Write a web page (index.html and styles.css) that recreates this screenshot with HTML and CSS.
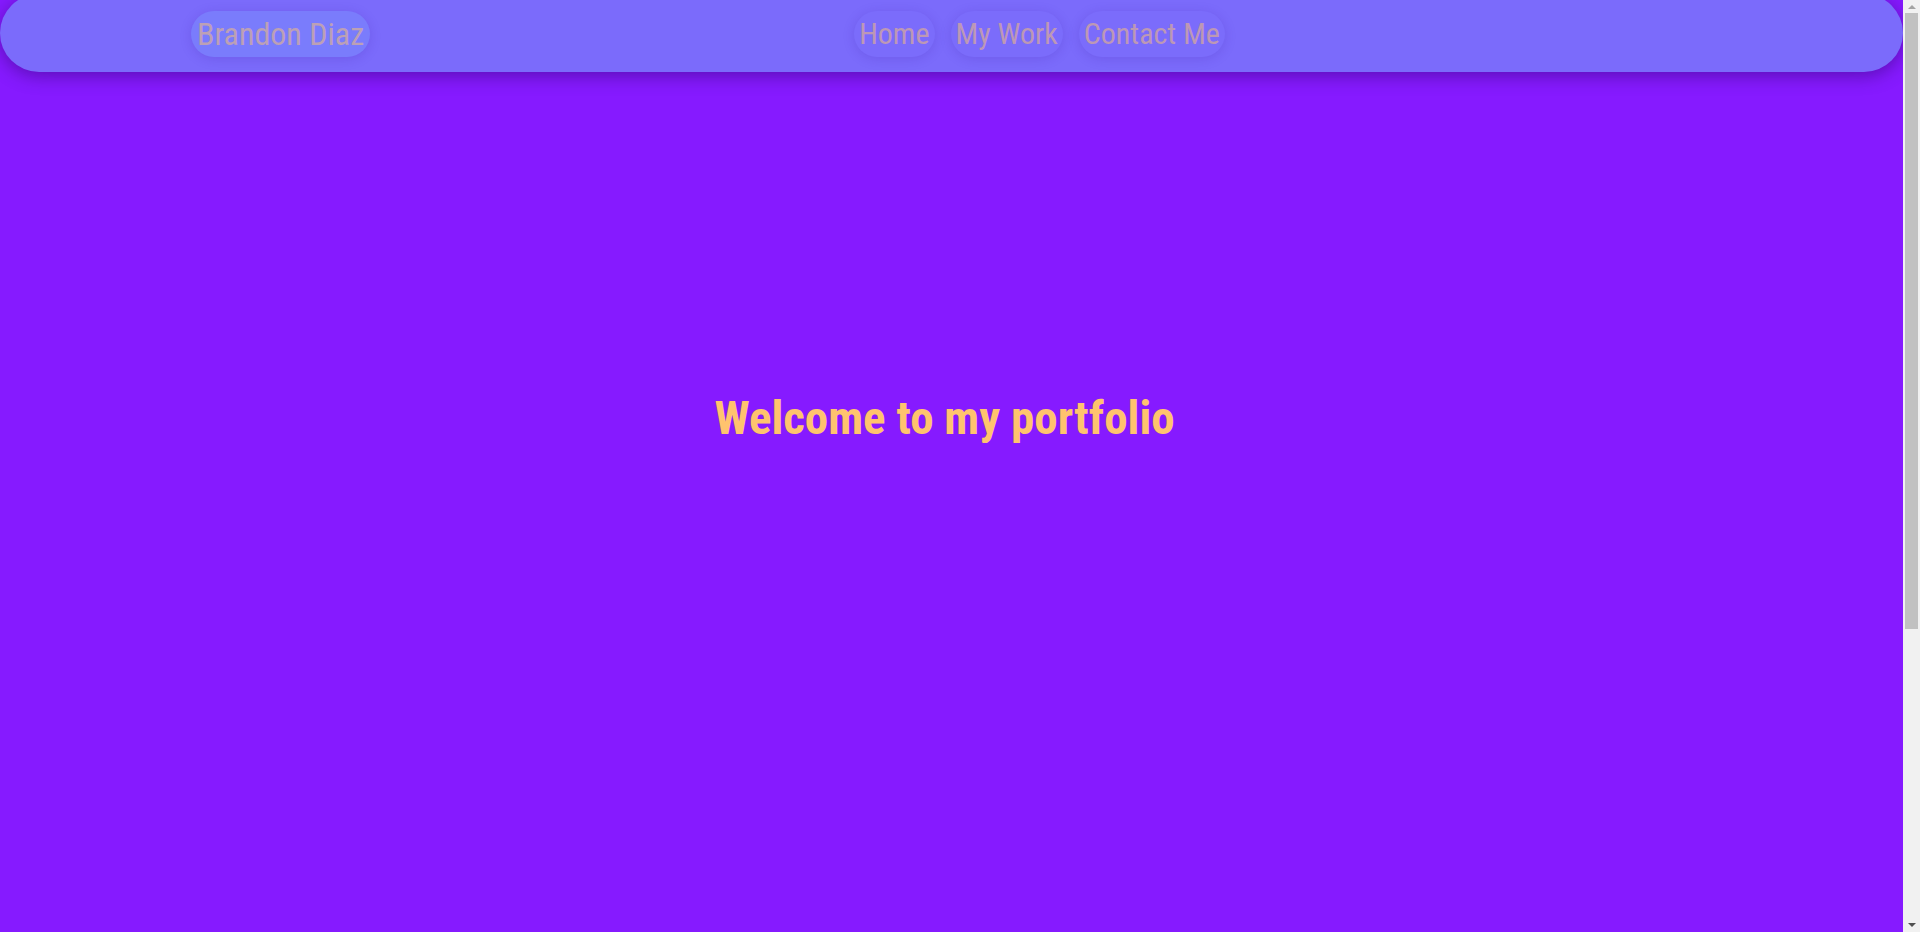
FILE: index.html
```html
<!DOCTYPE html>
<html lang="en">
<head>
<meta charset="utf-8">
<title>Brandon Diaz</title>
<link rel="stylesheet" href="styles.css">
</head>
<body>
<nav class="nav">
  <a class="brand pill" href="#">Brandon Diaz</a>
  <ul class="links">
    <li><a class="pill link" href="#">Home</a></li>
    <li><a class="pill link" href="#">My Work</a></li>
    <li><a class="pill link" href="#">Contact Me</a></li>
  </ul>
</nav>
<main class="hero">
  <h1 class="title">Welcome to my portfolio</h1>
</main>
<div class="scrollbar" aria-hidden="true">
  <span class="arrow up"></span>
  <span class="thumb"></span>
  <span class="arrow down"></span>
</div>
</body>
</html>
```
FILE: styles.css
```css
html, body {
  margin: 0;
  padding: 0;
}
body {
  background: #861aff;
  font-family: "Roboto Condensed", "DejaVu Sans", sans-serif;
  min-height: 1360px;
  width: 1903px;
}
.nav {
  display: flex;
  align-items: center;
  height: 78px;
  margin-top: -6px;
  padding: 2px 0 0 191px;
  box-sizing: border-box;
  background: #7b6bfb;
  border-radius: 39px;
  box-shadow: 0 4px 18px rgba(40, 0, 90, 0.45);
}
.pill {
  display: block;
  height: 46px;
  line-height: 46px;
  border-radius: 23px;
  padding: 0 6px;
  font-size: 32px;
  color: rgba(255, 196, 110, 0.5);
  text-decoration: none;
  box-shadow: 0 2px 12px rgba(60, 30, 160, 0.18);
}
.brand {
  background: #7a7cfc;
}
.links {
  display: flex;
  gap: 16px;
  list-style: none;
  margin: 0 0 0 484px;
  padding: 0;
}
.link {
  background: #7b6cfb;
  font-size: 30px;
  padding: 0 5px;
}
.hero {
  display: flex;
  justify-content: center;
  padding-top: 318px;
  padding-right: 14px;
}
.title {
  margin: 0;
  font-size: 47px;
  font-weight: bold;
  color: #ffc36e;
}
.scrollbar {
  position: fixed;
  top: 0;
  right: 0;
  width: 17px;
  height: 100vh;
  background: #f1f1f1;
  display: flex;
  flex-direction: column;
  align-items: center;
}
.thumb {
  display: block;
  width: 13px;
  height: 616px;
  background: #c1c1c1;
  flex: none;
}
.arrow {
  display: block;
  width: 0;
  height: 0;
  border-left: 4px solid transparent;
  border-right: 4px solid transparent;
  flex: none;
}
.arrow.up {
  margin: 5px 0 4px;
  border-bottom: 4px solid #a3a3a3;
}
.arrow.down {
  margin-top: auto;
  margin-bottom: 5px;
  border-top: 4px solid #505050;
}
```
